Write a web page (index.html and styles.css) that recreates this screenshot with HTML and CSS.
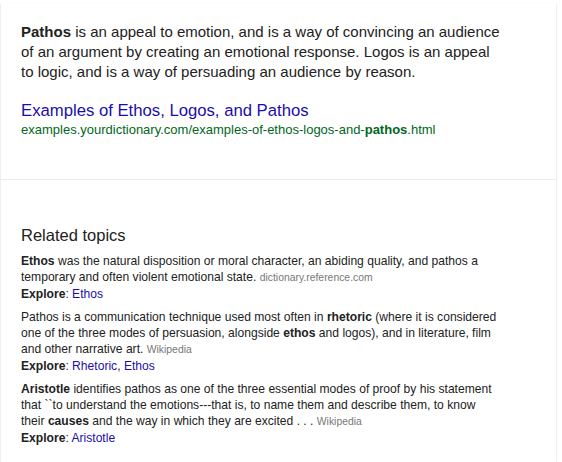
FILE: index.html
```html
<!DOCTYPE html>
<html>
<head>
<meta charset="utf-8">
<link rel="stylesheet" href="styles.css">
</head>
<body>
<div class="card">
  <div class="snippet">
    <p class="lead"><b>Pathos</b> is an appeal to emotion, and is a way of convincing an audience of an argument by creating an emotional response. Logos is an appeal to logic, and is a way of persuading an audience by reason.</p>
    <a class="title" href="#">Examples of Ethos, Logos, and Pathos</a>
    <div class="url">examples.yourdictionary.com/examples-of-ethos-logos-and-<b>pathos</b>.html</div>
  </div>
  <div class="related">
    <h2 class="heading">Related topics</h2>
    <div class="item">
      <p><b>Ethos</b> was the natural disposition or moral character, an abiding quality, and pathos a temporary and often violent emotional state. <span class="src">dictionary.reference.com</span></p>
      <p><b>Explore</b>: <a href="#">Ethos</a></p>
    </div>
    <div class="item">
      <p>Pathos is a communication technique used most often in <b>rhetoric</b> (where it is considered one of the three modes of persuasion, alongside <b>ethos</b> and logos), and in literature, film and other narrative art. <span class="src">Wikipedia</span></p>
      <p><b>Explore</b>: <a href="#">Rhetoric</a>, <a href="#">Ethos</a></p>
    </div>
    <div class="item">
      <p><b>Aristotle</b> identifies pathos as one of the three essential modes of proof by his statement that ``to understand the emotions---that is, to name them and describe them, to know their <b>causes</b> and the way in which they are excited . . . <span class="src">Wikipedia</span></p>
      <p><b>Explore</b>: <a href="#">Aristotle</a></p>
    </div>
  </div>
</div>
</body>
</html>
```
FILE: styles.css
```css
html, body {
  margin: 0;
  padding: 0;
  background: #fff;
  overflow: hidden;
}
body {
  font-family: "Liberation Sans", Arial, sans-serif;
  color: #222;
}
.card {
  margin: 3px 0 0 1px;
  width: 555px;
  height: 459px;
  box-sizing: border-box;
  background: #fff;
  box-shadow: 0 1px 2px rgba(0,0,0,0.2);
}
.snippet {
  padding: 19px 39px 41px 20px;
  border-bottom: 1px solid #ebebeb;
}
.lead {
  margin: 0 0 18px;
  max-width: 480px;
  font-size: 15px;
  line-height: 20px;
}
.title {
  display: block;
  font-size: 16.7px;
  line-height: 22px;
  color: #1a0dab;
  text-decoration: none;
}
.url {
  font-size: 13px;
  line-height: 16px;
  color: #006621;
  white-space: nowrap;
}
.related {
  padding: 44px 59px 0 20px;
}
.heading {
  margin: 0 0 7px;
  font-size: 16.5px;
  line-height: 22px;
  font-weight: normal;
  color: #222;
}
.item {
  margin-bottom: 7px;
}
.item p {
  margin: 0;
  font-size: 12.1px;
  line-height: 16px;
}
.item a {
  color: #1a0dab;
  text-decoration: none;
}
.src {
  font-size: 10.4px;
  color: #777;
}
```
